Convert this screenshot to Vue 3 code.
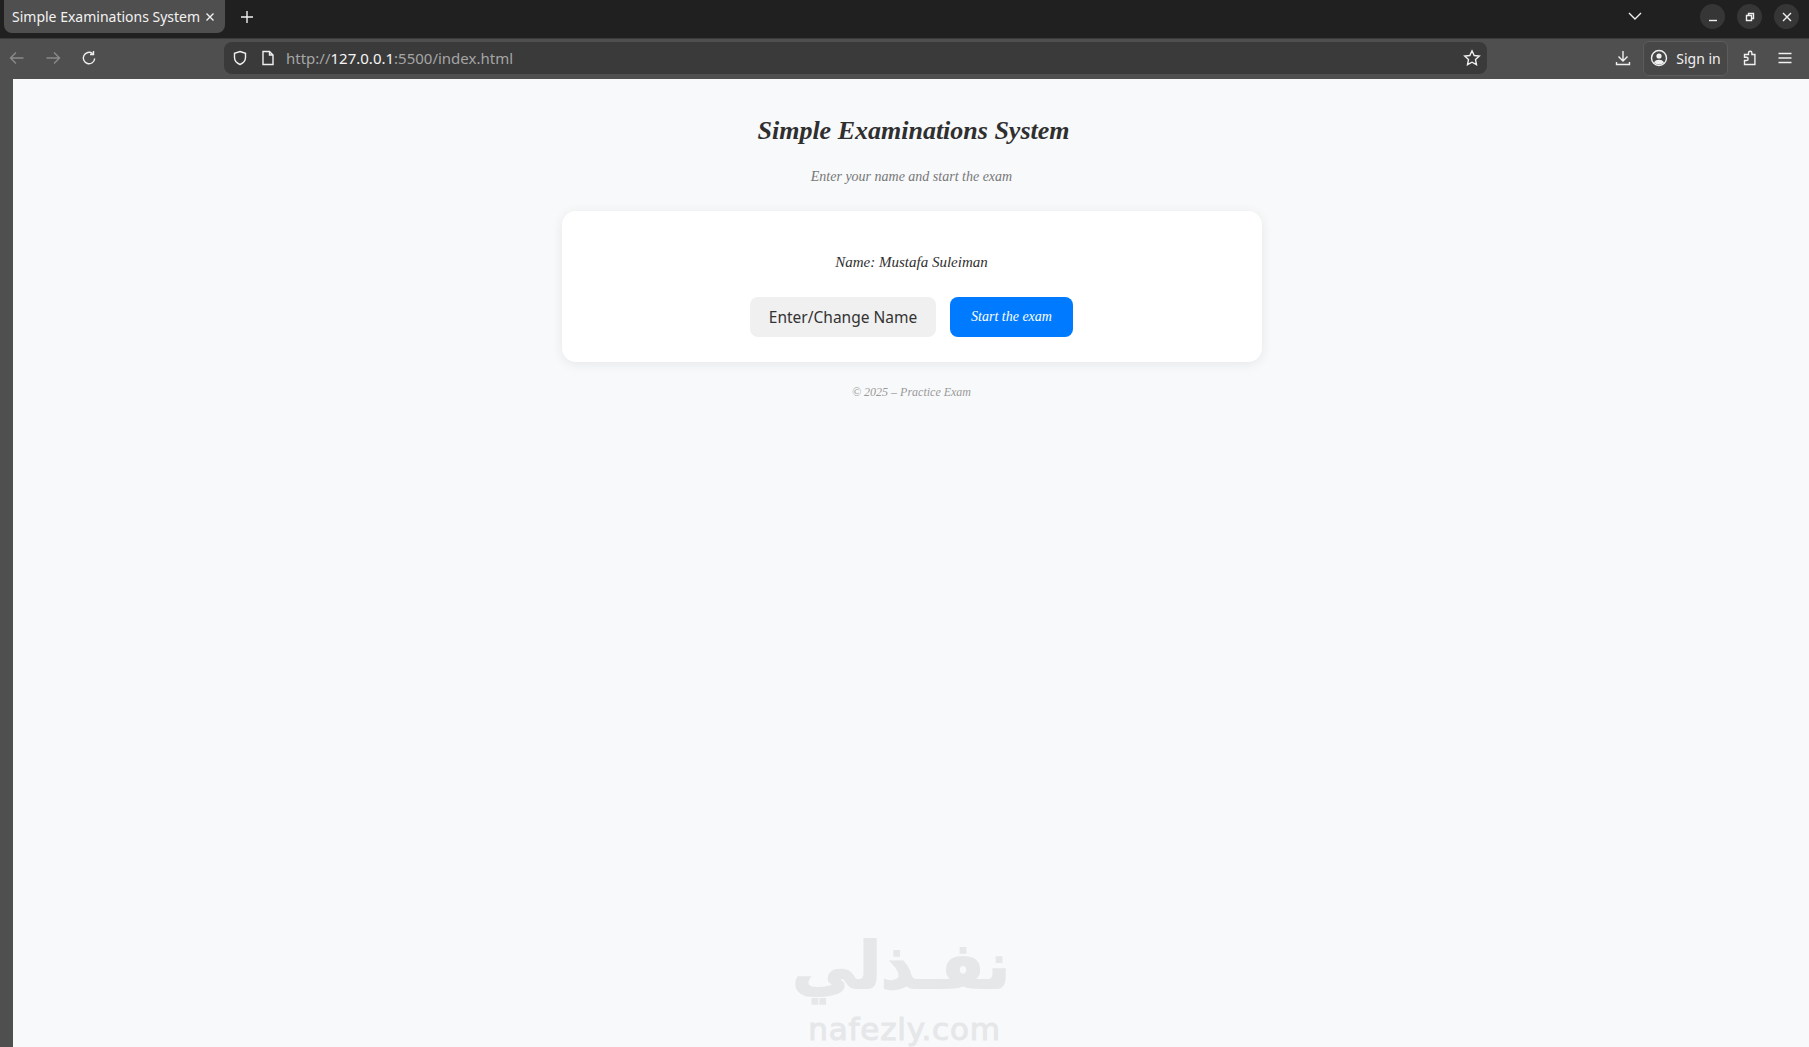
<template>
  <div class="browser">
    <div class="tabbar">
      <div class="tab">
        <span class="tab-title">Simple Examinations System</span>
        <svg class="tab-close" width="12" height="12" viewBox="0 0 12 12"><path d="M2.5 2.5l7 7M9.500 2.500l-7 7" /></svg>
      </div>
      <svg class="new-tab" width="14" height="14" viewBox="0 0 14 14"><path d="M7 1v12M1 7h12" /></svg>
      <div class="spacer"></div>
      <svg class="tabs-menu" width="14" height="8" viewBox="0 0 14 8"><path d="M1 1l6 6 6-6" /></svg>
      <div class="win-buttons">
        <button class="win-btn"><svg width="12" height="12" viewBox="0 0 12 12"><path d="M2 9.500h8" /></svg></button>
        <button class="win-btn"><svg width="12" height="12" viewBox="0 0 12 12"><path d="M2.500 4.500h5v5h-5zM4.500 4.500v-2h5v5h-2" /></svg></button>
        <button class="win-btn"><svg width="12" height="12" viewBox="0 0 12 12"><path d="M2 2l8 8M10 2l-8 8" /></svg></button>
      </div>
    </div>

    <div class="toolbar">
      <div class="nav">
        <svg class="dim" width="16" height="16" viewBox="0 0 16 16"><path d="M14.500 8h-13M7 2.500L1.500 8 7 13.500" /></svg>
        <svg class="dim" width="16" height="16" viewBox="0 0 16 16"><path d="M1.500 8h13M9 2.500L14.500 8 9 13.500" /></svg>
        <svg width="16" height="16" viewBox="0 0 16 16"><path d="M13.700 8.500A5.700 5.700 0 1 1 11.500 3.500M12.500 1v3.500H9" /></svg>
      </div>
      <div class="urlbar">
        <svg width="16" height="16" viewBox="0 0 16 16"><path d="M8 1.500l5.500 1.800v4.200c0 3.400-2.300 5.600-5.500 7-3.200-1.400-5.500-3.600-5.500-7V3.300z" /></svg>
        <svg class="page-icon" width="14" height="16" viewBox="0 0 14 16"><path d="M2 1.500h6.500l3.500 3.500v9.500H2zM8.500 1.500V5H12" /></svg>
        <span class="url"><span class="url-dim">http://</span>127.0.0.1<span class="url-dim">:5500/index.html</span></span>
        <div class="spacer"></div>
        <svg width="18" height="18" viewBox="0 0 18 18"><path d="M9 1.800l2.200 4.700 5.100.6-3.800 3.500 1 5.100L9 13.200l-4.500 2.500 1-5.100-3.800-3.500 5.100-.6z" /></svg>
      </div>
      <div class="tools">
        <svg class="download" width="16" height="16" viewBox="0 0 16 16"><path d="M8 1v9.500M3.500 6.500L8 11l4.500-4.500M1.500 12v2.500h13V12" /></svg>
        <div class="signin">
          <svg width="18" height="18" viewBox="0 0 18 18"><circle cx="9" cy="9" r="7.500" /><circle class="solid" cx="9" cy="7" r="2.600" /><path class="solid" d="M4 13.500c1-2 3-2.700 5-2.700s4 .7 5 2.700c-1.300 1.300-3 2-5 2s-3.700-.7-5-2z" /></svg>
          <span>Sign in</span>
        </div>
        <svg class="puzzle" width="16" height="16" viewBox="0 0 16 16"><path d="M2.500 14.500v-4h2a1.600 1.600 0 0 0 0-3.200h-2V4.500h4V3a1.700 1.700 0 0 1 3.400 0v1.500h3v10z" /></svg>
        <svg class="menu" width="16" height="16" viewBox="0 0 16 16"><path d="M1.500 3.500h13M1.500 8h13M1.500 12.500h13" /></svg>
      </div>
    </div>

    <div class="viewport">
      <main class="page">
        <h1 class="title">Simple Examinations System</h1>
        <p class="subtitle">Enter your name and start the exam</p>
        <section class="card">
          <p class="name">Name: {{ userName }}</p>
          <div class="actions">
            <button class="btn-name">Enter/Change Name</button>
            <button class="btn-start">Start the exam</button>
          </div>
        </section>
        <footer class="footer">© 2025 – Practice Exam</footer>

        <div class="watermark">
          <div class="wm-arabic" dir="rtl" lang="ar">نفـذلي</div>
          <div class="wm-latin">nafezly.com</div>
        </div>
      </main>
    </div>
  </div>
</template>

<script setup>
import { ref } from 'vue'

const userName = ref('Mustafa Suleiman')
</script>

<style>
html,
body {
  margin: 0;
  height: 100%;
  overflow: hidden;
}
</style>

<style scoped>
.browser {
  width: 1809px;
  height: 1047px;
  display: flex;
  flex-direction: column;
  background: #4f4f4f;
  font-family: "Noto Sans", sans-serif;
}

svg {
  fill: none;
  stroke: #f0f0f0;
  stroke-width: 1.4;
  flex: none;
}

svg .solid {
  fill: #f0f0f0;
  stroke: none;
}

.spacer {
  flex: 1;
}

.tabbar {
  height: 38px;
  flex: none;
  display: flex;
  align-items: flex-start;
  background: #202020;
  padding-left: 4px;
}

.tab {
  width: 221px;
  height: 33px;
  box-sizing: border-box;
  padding: 0 9px 0 8px;
  display: flex;
  align-items: center;
  justify-content: space-between;
  background: #4f4f4f;
  border-radius: 0 0 8px 8px;
  color: #f2f2f2;
  font-size: 14px;
  white-space: nowrap;
}

.new-tab {
  margin: 10px 0 0 15px;
}

.tabs-menu {
  margin: 12px 58px 0 0;
}

.win-buttons {
  display: flex;
  gap: 12px;
  margin: 4px 10px 0 0;
}

.win-btn {
  width: 25px;
  height: 25px;
  padding: 0;
  border: none;
  border-radius: 50%;
  background: #363636;
  display: flex;
  align-items: center;
  justify-content: center;
}

.toolbar {
  height: 41px;
  flex: none;
  display: flex;
  align-items: center;
  padding-bottom: 2px;
  background: #4f4f4f;
  border-top: 1px solid #3a3a3a;
  box-sizing: border-box;
}

.nav {
  width: 224px;
  display: flex;
  gap: 20px;
  padding-left: 9px;
  box-sizing: border-box;
}

.dim {
  stroke: #8b8b8b;
}

.urlbar {
  width: 1263px;
  height: 32px;
  box-sizing: border-box;
  display: flex;
  align-items: center;
  padding: 0 6px 0 8px;
  border-radius: 8px;
  background: #3a3a3a;
}

.page-icon {
  margin-left: 13px;
}

.url {
  margin-left: 11px;
  font-size: 15px;
  color: #f5f5f5;
}

.url-dim {
  color: #a5a5a5;
}

.tools {
  flex: 1;
  display: flex;
  align-items: center;
}

.download {
  margin-left: 128px;
}

.signin {
  width: 85px;
  height: 35px;
  box-sizing: border-box;
  margin-left: 12px;
  display: flex;
  align-items: center;
  justify-content: center;
  gap: 8px;
  border: 1px solid #5c5c5c;
  border-radius: 6px;
  background: #474747;
  color: #f0f0f0;
  font-size: 14px;
}

.puzzle {
  margin-left: 14px;
}

.menu {
  margin-left: 19px;
}

.viewport {
  flex: 1;
  display: flex;
  padding-left: 13px;
  min-height: 0;
}

.page {
  flex: 1;
  position: relative;
  overflow: hidden;
  background: #f8f9fb;
  display: flex;
  flex-direction: column;
  align-items: center;
  font-family: "Liberation Serif", serif;
  font-style: italic;
  padding: 33px 0 0 1px;
  box-sizing: border-box;
}

.title {
  margin: 0 0 0 4px;
  font-size: 26px;
  line-height: 38px;
  font-weight: 700;
  color: #2f2f2f;
  white-space: nowrap;
}

.subtitle {
  margin: 18px 0 0;
  font-size: 14px;
  line-height: 18px;
  color: #777;
}

.card {
  width: 700px;
  height: 151px;
  box-sizing: border-box;
  margin-top: 25px;
  padding-top: 41px;
  background: #fff;
  border-radius: 14px;
  box-shadow: 0 2px 12px rgba(0, 0, 0, 0.08);
  display: flex;
  flex-direction: column;
  align-items: center;
}

.name {
  margin: 0;
  font-size: 15px;
  line-height: 20px;
  color: #2f2f2f;
}

.actions {
  display: flex;
  gap: 14px;
  margin-top: 25px;
}

.actions button {
  height: 40px;
  border: none;
  border-radius: 8px;
}

.btn-name {
  width: 186px;
  background: #f0f0f0;
  color: #333;
  font-family: "Noto Sans", sans-serif;
  font-size: 15.500px;
}

.btn-start {
  width: 123px;
  background: #007bff;
  color: #fff;
  font-family: "Liberation Serif", serif;
  font-style: italic;
  font-size: 14px;
}

.footer {
  margin-top: 22px;
  font-size: 12px;
  line-height: 16px;
  color: #999;
}

.watermark {
  position: absolute;
  left: 786px;
  top: 841px;
  width: 211px;
  text-align: center;
  color: #e6e7e9;
  font-family: "DejaVu Sans", sans-serif;
  font-style: normal;
  font-weight: 700;
}

.wm-arabic {
  font-size: 64px;
  line-height: 92px;
  -webkit-text-stroke: 2px #e6e7e9;
  white-space: nowrap;
}

.wm-latin {
  font-family: "DejaVu Sans", sans-serif;
  font-weight: 400;
  font-size: 31px;
  line-height: 34px;
  letter-spacing: 0.800px;
  -webkit-text-stroke: 1px #e6e7e9;
}
</style>
